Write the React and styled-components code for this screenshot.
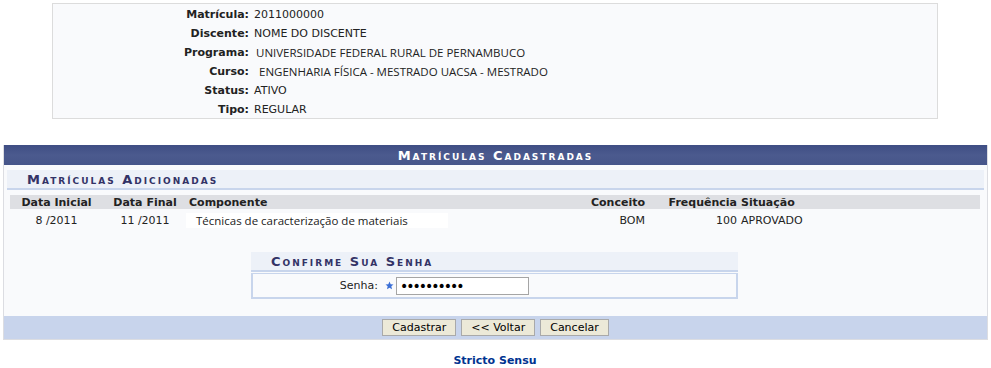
import React from "react";
import styled, { createGlobalStyle } from "styled-components";

const GlobalStyle = createGlobalStyle`
  body {
    margin: 0;
    background: #fff;
    font-family: "DejaVu Sans", Verdana, sans-serif;
    font-size: 11px;
    color: #222;
  }
`;

const Page = styled.div`
  width: 991px;
  padding: 3px 4px 0 3px;
  box-sizing: border-box;
`;

const InfoBox = styled.div`
  margin: 0 49px;
  width: 886px;
  box-sizing: border-box;
  border: 1px solid #dcdcdc;
  background: #f9fafc;
`;

const InfoRow = styled.div`
  display: grid;
  grid-template-columns: 196px 1fr;
  column-gap: 5px;
  height: 19px;
  box-sizing: border-box;
  padding-top: 2px;
  align-items: center;
`;

const Label = styled.span`
  font-weight: bold;
  text-align: right;
`;

const Value = styled.span`
  font-family: ${(p) => (p.$alt ? '"Open Sans", "Noto Sans", sans-serif' : "inherit")};
  font-size: ${(p) => (p.$alt ? "11.5px" : "11px")};
  padding-left: ${(p) => (p.$alt ? "2px" : "0")};
`;

const Panel = styled.div`
  margin-top: 26px;
  width: 983px;
  border: 1px solid #dcdde2;
  border-top: none;
  background: #f9fafc;
`;

const PanelHeader = styled.div`
  height: 20px;
  background: linear-gradient(#3f4e84 0%, #4b5a8e 50%, #46558a 100%);
  color: #fff;
  font-weight: bold;
  font-variant: small-caps;
  font-size: 13px;
  letter-spacing: 2px;
  text-align: center;
  line-height: 21px;
`;

const SubHeader = styled.div`
  margin: ${(p) => (p.$flush ? "0" : "5px 3px 0")};
  height: 18px;
  background: #edf1f8;
  border-bottom: 2px solid #c8d5ec;
  color: #333366;
  font-weight: bold;
  font-variant: small-caps;
  font-size: 13px;
  letter-spacing: 2px;
  line-height: 20px;
  padding-left: 20px;
`;

const Table = styled.table`
  margin: 5px 0 0 6px;
  width: 970px;
  border-collapse: collapse;
  table-layout: fixed;
`;

const Th = styled.th`
  background: #dedfe3;
  font-weight: bold;
  text-align: ${(p) => p.$align || "left"};
  height: 14px;
  padding: 0 2px;
  white-space: nowrap;
`;

const Td = styled.td`
  text-align: ${(p) => p.$align || "left"};
  height: 15px;
  padding: 4px 2px 0;
  white-space: nowrap;
`;

const AltText = styled.span`
  display: inline-block;
  width: 252px;
  margin-left: -3px;
  background: #fff;
  font-family: "Open Sans", "Noto Sans", sans-serif;
  font-size: 11.5px;
  padding-left: 10px;
  line-height: 15px;
`;

const ConfirmBox = styled.div`
  width: 487px;
  margin: 24px 0 0 247px;
`;

const ConfirmBody = styled.div`
  display: flex;
  align-items: center;
  height: 23px;
  border: 2px solid #c8d5ec;
  border-top-width: 1px;
  margin-top: 1px;
`;

const FieldLabel = styled.span`
  width: 128px;
  text-align: right;
  padding-right: 3px;
  box-sizing: border-box;
`;

const Star = styled.svg`
  width: 9px;
  height: 9px;
  margin: 0 2px 0 4px;
`;

const PassInput = styled.input`
  width: 133px;
  height: 18px;
  box-sizing: border-box;
  border: 1px solid #a5a5a5;
  background: #fff;
  font-family: "DejaVu Sans", sans-serif;
  font-size: 14px;
  letter-spacing: -2px;
  padding: 0 3px;
  outline: none;
`;

const Footer = styled.div`
  margin-top: 17px;
  height: 23px;
  background: #c8d4ec;
  display: flex;
  justify-content: center;
  align-items: center;
  gap: 5px;
`;

const Button = styled.button`
  height: 17px;
  padding: 0 9px;
  background: #ece9d8;
  border: 1px solid #a9a9a9;
  font-family: "DejaVu Sans", Verdana, sans-serif;
  font-size: 11px;
  color: #000;
  line-height: 15px;
`;

const BottomLink = styled.a`
  display: block;
  text-align: center;
  margin-top: 14px;
  line-height: 13px;
  color: #003390;
  font-weight: bold;
  text-decoration: none;
  font-size: 11px;
`;

const info = [
  ["Matrícula:", "2011000000"],
  ["Discente:", "NOME DO DISCENTE"],
  ["Programa:", "UNIVERSIDADE FEDERAL RURAL DE PERNAMBUCO", true],
  ["Curso:", "\u00a0ENGENHARIA FÍSICA - MESTRADO UACSA - MESTRADO", true],
  ["Status:", "ATIVO"],
  ["Tipo:", "REGULAR"],
];

export default function App() {
  return (
    <Page>
      <GlobalStyle />
      <InfoBox>
        {info.map(([l, v, alt]) => (
          <InfoRow key={l}>
            <Label>{l}</Label>
            <Value $alt={alt}>{v}</Value>
          </InfoRow>
        ))}
      </InfoBox>

      <Panel>
        <PanelHeader>Matrículas Cadastradas</PanelHeader>
        <SubHeader>Matrículas Adicionadas</SubHeader>
        <Table>
          <colgroup>
            <col style={{ width: 93 }} />
            <col style={{ width: 84 }} />
            <col style={{ width: 400 }} />
            <col style={{ width: 60 }} />
            <col style={{ width: 92 }} />
            <col />
          </colgroup>
          <thead>
            <tr>
              <Th $align="center">Data Inicial</Th>
              <Th $align="center">Data Final</Th>
              <Th>Componente</Th>
              <Th $align="right">Conceito</Th>
              <Th $align="right">Frequência</Th>
              <Th>Situação</Th>
            </tr>
          </thead>
          <tbody>
            <tr>
              <Td $align="center">8 /2011</Td>
              <Td $align="center">11 /2011</Td>
              <Td>
                <AltText>Técnicas de caracterização de materiais</AltText>
              </Td>
              <Td $align="right">BOM</Td>
              <Td $align="right">100</Td>
              <Td>APROVADO</Td>
            </tr>
          </tbody>
        </Table>

        <ConfirmBox>
          <SubHeader $flush>Confirme Sua Senha</SubHeader>
          <ConfirmBody>
            <FieldLabel>Senha:</FieldLabel>
            <Star viewBox="0 0 24 24">
              <path
                d="M12 1.5l3.1 7 7.6.7-5.8 5 1.8 7.5L12 17.8 5.3 21.7l1.8-7.5-5.8-5 7.6-.7z"
                fill="#3b6fd6"
              />
            </Star>
            <PassInput type="password" defaultValue="1234567890" readOnly />
          </ConfirmBody>
        </ConfirmBox>

        <Footer>
          <Button>Cadastrar</Button>
          <Button>&lt;&lt; Voltar</Button>
          <Button>Cancelar</Button>
        </Footer>
      </Panel>

      <BottomLink href="#">Stricto Sensu</BottomLink>
    </Page>
  );
}
